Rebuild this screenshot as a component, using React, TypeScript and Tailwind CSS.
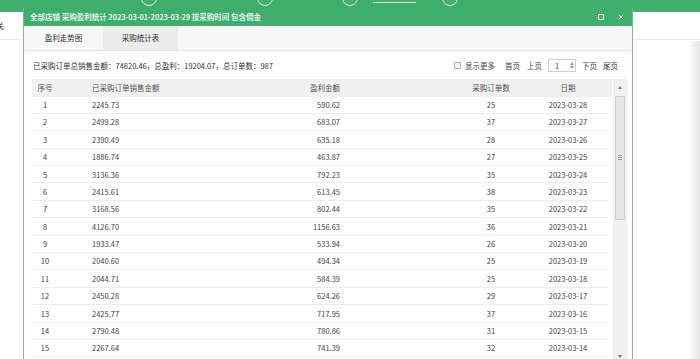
import { X } from 'lucide-react'

const ROWS = [
  ['1', '2245.73', '590.62', '25', '2023-03-28'],
  ['2', '2499.28', '683.07', '37', '2023-03-27'],
  ['3', '2390.49', '635.18', '28', '2023-03-26'],
  ['4', '1886.74', '463.87', '27', '2023-03-25'],
  ['5', '3136.36', '792.23', '35', '2023-03-24'],
  ['6', '2415.61', '613.45', '38', '2023-03-23'],
  ['7', '3168.56', '802.44', '35', '2023-03-22'],
  ['8', '4126.70', '1156.63', '36', '2023-03-21'],
  ['9', '1933.47', '533.94', '26', '2023-03-20'],
  ['10', '2040.60', '494.34', '25', '2023-03-19'],
  ['11', '2044.71', '584.39', '25', '2023-03-18'],
  ['12', '2450.28', '624.26', '29', '2023-03-17'],
  ['13', '2425.77', '717.95', '37', '2023-03-16'],
  ['14', '2790.48', '780.86', '31', '2023-03-15'],
  ['15', '2267.64', '741.39', '32', '2023-03-14'],
]

const COLS = 'grid grid-cols-[26px_142px_148px_194px_52px_14px]'

function Row({ r }: { r: string[] }) {
  return (
    <div className={`${COLS} h-[17.4px] items-center border-b border-[#ececec] text-[#444]`}>
      <div className="text-center">{r[0]}</div>
      <div className="pl-[34px]">{r[1]}</div>
      <div className="text-right pr-[8px]">{r[2]}</div>
      <div className="pl-[92px] text-center">{r[3]}</div>
      <div className="text-center whitespace-nowrap">{r[4]}</div>
      <div />
    </div>
  )
}

export default function App() {
  return (
    <div className="relative w-[700px] h-[359px] overflow-hidden bg-white font-['Noto_Sans_CJK_SC','Microsoft_YaHei',sans-serif] text-[7.5px] leading-none">
      {/* page behind the dialog */}
      <div className="relative h-[12px] bg-[#3fae6a]">
        <div className="absolute left-[141px] -top-[10px] w-[16px] h-[16px] rounded-full border border-white/80" />
        <div className="absolute left-[257px] -top-[10px] w-[16px] h-[16px] rounded-full border border-white/80" />
        <div className="absolute left-[342px] -top-[10px] w-[16px] h-[16px] rounded-full border border-white/80" />
        <div className="absolute left-[373px] top-[2px] w-[43px] h-px bg-white/80" />
        <div className="absolute left-[442px] -top-[10px] w-[16px] h-[16px] rounded-full border border-white/80" />
      </div>
      <div className="h-[28px] border-b border-[#e6e6e6]">
        <span className="block -ml-[4px] pt-[10px] text-[8px] text-[#333]">关</span>
      </div>
      <div className="absolute right-0 top-[41px] bottom-0 w-[12px] bg-gradient-to-r from-white to-[#e6e6e6]" />

      {/* dialog */}
      <div className="absolute left-[23px] top-[8px] w-[610px] h-[360px] bg-white border-x border-[#6cc091] flex flex-col">
        <div className="h-[18px] bg-[#3fae6a] flex items-center justify-between pl-[6px] pr-[7px] text-white">
          <span className="font-medium">全部店铺 采购盈利统计 2023-03-01-2023-03-29 按采购时间 包含佣金</span>
          <div className="flex items-center gap-[13px]">
            <div className="w-[6px] h-[6px] border-[1.5px] border-white" />
            <X className="w-[8px] h-[8px]" strokeWidth={3} />
          </div>
        </div>

        <div className="h-[25px] flex bg-[#f7f7f7] border-b border-[#e3e3e3] text-[#333]">
          <div className="w-[79px] flex items-center justify-center">盈利走势图</div>
          <div className="w-[75px] flex items-center justify-center bg-[#ececec]">采购统计表</div>
        </div>

        <div className="h-[27px] flex items-center justify-between pl-[9px] pr-[14px] pt-[2px] text-[#333]">
          <span>已采购订单总销售金额：74820.46，总盈利：19204.07，总订单数：987</span>
          <div className="flex items-center text-[#444]">
            <div className="w-[7px] h-[7px] border border-[#b5b5b5] bg-[#f4f4f4]" />
            <span className="ml-[4px]">显示更多</span>
            <span className="ml-[10px]">首页</span>
            <span className="ml-[7px]">上页</span>
            <div className="ml-[6px] w-[28px] h-[13px] border border-[#cfcfcf] flex items-center justify-between pl-[6px] pr-[1px]">
              <span>1</span>
              <div className="flex flex-col gap-px text-[#999]">
                <div className="w-0 h-0 border-x-[2.5px] border-x-transparent border-b-[3px] border-b-[#999]" />
                <div className="w-0 h-0 border-x-[2.5px] border-x-transparent border-t-[3px] border-t-[#999]" />
              </div>
            </div>
            <span className="ml-[6px]">下页</span>
            <span className="ml-[6px]">尾页</span>
          </div>
        </div>

        <div className="flex flex-1 pl-[8px] pt-[0.5px]">
          <div className="w-[580px]">
            <div className={`${COLS} h-[18px] items-center bg-[#f0f0f0] text-[#555]`}>
              <div className="text-center">序号</div>
              <div className="pl-[34px]">已采购订单销售金额</div>
              <div className="text-right pr-[8px]">盈利金额</div>
              <div className="pl-[92px] text-center">采购订单数</div>
              <div className="text-center">日期</div>
              <div />
            </div>
            <div className="mr-[4px]">
              {ROWS.map(r => <Row key={r[0]} r={r} />)}
            </div>
          </div>
          <div className="ml-[1px] w-[14px] bg-[#f0f0f0] flex flex-col items-center">
            <div className="h-[17px] flex items-center justify-center">
              <div className="w-0 h-0 border-x-[2.5px] border-x-transparent border-b-[3px] border-b-[#777]" />
            </div>
            <div className="w-[10px] h-[124px] bg-[#e6e6e6] border border-[#cdcdcd] rounded-[1px] flex items-center justify-center">
              <div className="flex flex-col gap-[1px]">
                <div className="w-[4px] h-px bg-[#999]" />
                <div className="w-[4px] h-px bg-[#999]" />
                <div className="w-[4px] h-px bg-[#999]" />
              </div>
            </div>
            <div className="flex-1" />
            <div className="h-[20px] flex items-start pt-[7px] justify-center">
              <div className="w-0 h-0 border-x-[2.5px] border-x-transparent border-t-[3px] border-t-[#777]" />
            </div>
          </div>
        </div>
      </div>
    </div>
  )
}
